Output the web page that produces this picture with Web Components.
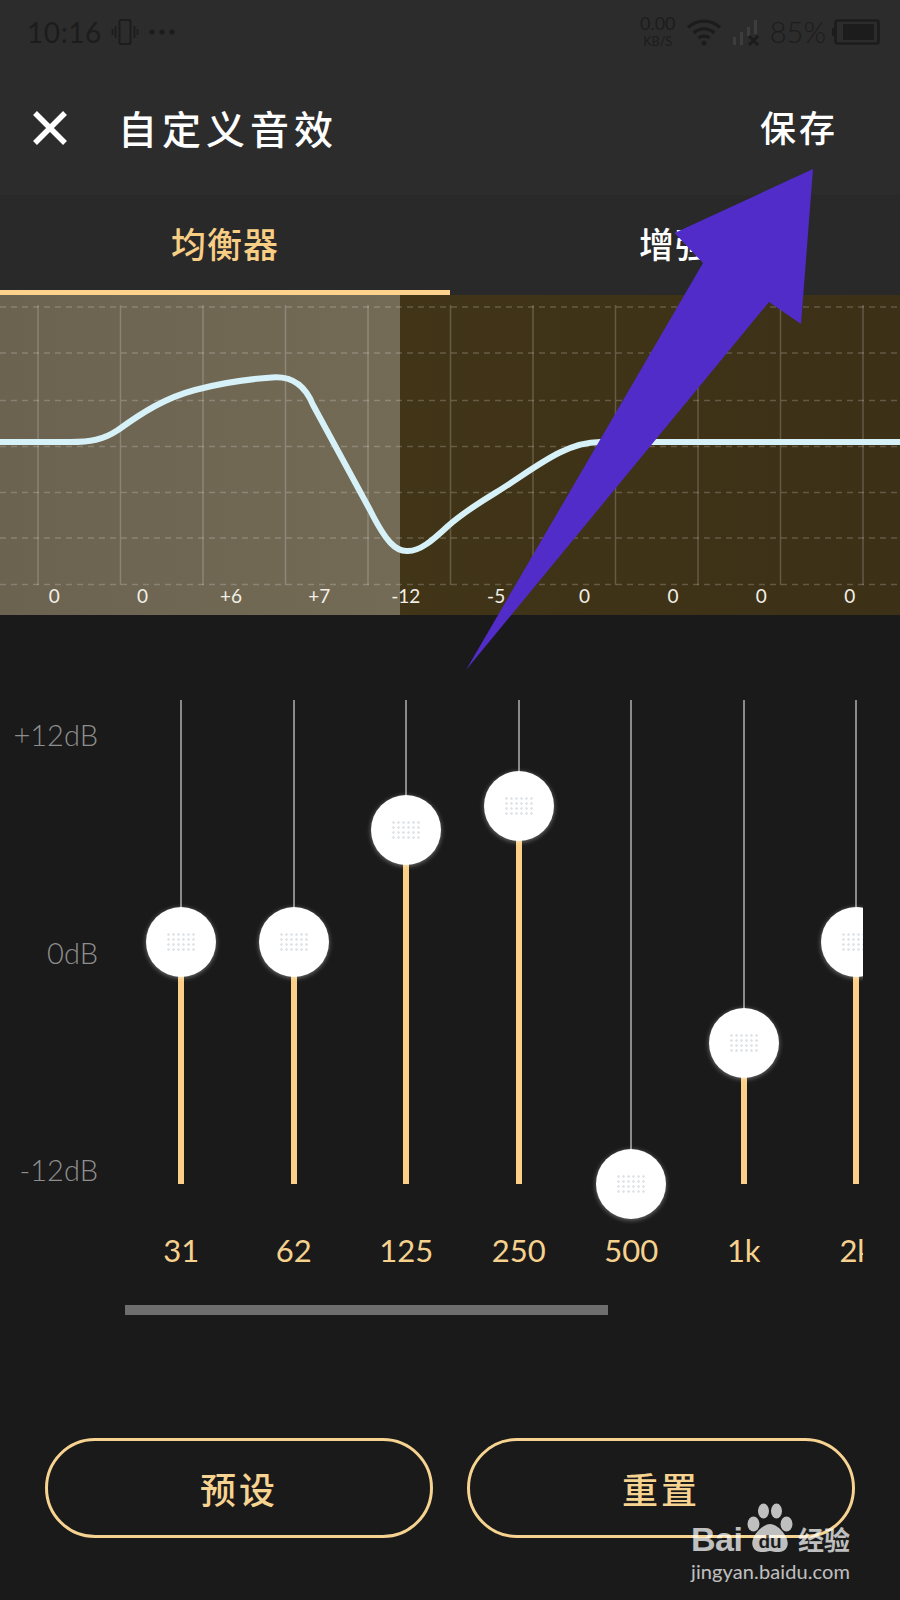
<!DOCTYPE html>
<html lang="zh">
<head>
<meta charset="utf-8">
<title>自定义音效</title>
<style>
html,body{margin:0;padding:0;background:#1a1a1a;}
body{width:900px;height:1600px;overflow:hidden;position:relative;font-family:"Lato","Noto Sans CJK SC",sans-serif;}
</style>
</head>
<body>
<eq-app>
  <phone-status></phone-status>
  <app-header title="自定义音效" action="保存"></app-header>
  <tab-bar></tab-bar>
  <eq-chart values="0,0,+6,+7,-12,-5,0,0,0,0"></eq-chart>
  <eq-panel>
    <eq-band label="31" pos="241.5"></eq-band>
    <eq-band label="62" pos="241.5"></eq-band>
    <eq-band label="125" pos="130"></eq-band>
    <eq-band label="250" pos="106"></eq-band>
    <eq-band label="500" pos="484"></eq-band>
    <eq-band label="1k" pos="343"></eq-band>
    <eq-band label="2k" pos="241.5"></eq-band>
  </eq-panel>
  <action-row>
    <pill-button>预设</pill-button>
    <pill-button>重置</pill-button>
  </action-row>
</eq-app>
<pointer-arrow></pointer-arrow>
<baidu-mark></baidu-mark>
<script>
const CJK='"Noto Sans CJK SC",sans-serif';
function def(name,html,setup){
  customElements.define(name,class extends HTMLElement{
    connectedCallback(){
      if(this.shadowRoot)return;
      const r=this.attachShadow({mode:'open'});
      r.innerHTML=typeof html==='function'?html(this):html;
      if(setup)setup(this,r);
    }
  });
}
def('eq-app',`<style>:host{display:flex;flex-direction:column;width:900px;height:1600px;background:#1a1a1a}</style><slot></slot>`);

def('phone-status',`<style>
:host{display:flex;align-items:center;justify-content:space-between;height:65px;box-sizing:border-box;padding:0 20px 2px 27px;background:#2c2c2c;color:#1c1c1c;font-family:Lato,sans-serif;font-weight:400}
.l,.r{display:flex;align-items:center}
.t{font-size:28px;letter-spacing:.6px;line-height:1}
.v{margin-left:9px}.d{margin-left:10px}
.n{display:flex;flex-direction:column;align-items:center;width:38px}
.n b{font-weight:400;font-size:18px;line-height:20px}.n i{font-style:normal;font-weight:400;font-size:12.5px;line-height:17px;}
.w{margin-left:9px}.s{margin-left:10px}
.p{font-size:29px;margin-left:6px;line-height:1;font-weight:300}
.b{margin-left:6px}
</style>
<div class="l"><span class="t">10:16</span>
<svg class="v" width="28" height="28" viewBox="0 0 28 28" fill="none" stroke="#1c1c1c"><rect x="8.5" y="2" width="11" height="24" rx="1.5" stroke-width="2"/><path d="M4.5 8v12M1.5 11v6M23.5 8v12M26.5 11v6" stroke-width="1.6"/></svg>
<svg class="d" width="26" height="8" viewBox="0 0 26 8" fill="#1c1c1c"><circle cx="3" cy="4" r="2.6"/><circle cx="13" cy="4" r="2.6"/><circle cx="23" cy="4" r="2.6"/></svg></div>
<div class="r"><span class="n"><b>0.00</b><i>KB/S</i></span>
<svg class="w" width="36" height="28" viewBox="0 0 36 28" fill="none" stroke="#1c1c1c" stroke-width="3.4"><path d="M2 9.5C11 1 25 1 34 9.5M7.5 15C13.500 9.500 22.500 9.500 28.500 15M12.500 20C15.500 17.500 20.500 17.500 23.500 20"/><circle cx="18" cy="25" r="2.500" fill="#1c1c1c" stroke="none"/></svg>
<svg class="s" width="32" height="28" viewBox="0 0 32 28"><g fill="#3d3d3d"><rect x="1" y="19" width="3" height="8"/><rect x="8" y="14" width="3" height="13"/><rect x="15" y="9" width="3" height="9"/><rect x="22" y="2" width="3" height="14"/></g><path d="M17 18l9 9M26 18l-9 9" stroke="#1c1c1c" stroke-width="3" fill="none"/></svg>
<span class="p">85%</span>
<svg class="b" width="48" height="26" viewBox="0 0 48 26" fill="none"><rect x="3.500" y="1.500" width="43" height="23" rx="2" stroke="#1c1c1c" stroke-width="2.600"/><rect x="0" y="9" width="3" height="8" fill="#1c1c1c"/><rect x="11" y="5" width="31" height="16" fill="#1c1c1c"/></svg>
</div>`);

def('app-header',h=>`<style>
:host{display:flex;align-items:center;height:130px;box-sizing:border-box;padding:0 0 6px 33px;background:#2c2c2c;color:#fff;font-family:${CJK}}
svg{flex:none;margin-top:2px}
.t{margin-left:51px;font-size:39px;font-weight:500;letter-spacing:5px;line-height:1.2}
.a{margin-left:auto;margin-right:62px;font-size:36px;font-weight:500;letter-spacing:3px;line-height:1.2}
</style>
<svg width="34" height="34" viewBox="0 0 34 34" stroke="#fff" stroke-width="5.500"><path d="M2 2L32 32M32 2L2 32"/></svg>
<span class="t">${h.getAttribute('title')}</span><span class="a">${h.getAttribute('action')}</span>`);

def('tab-bar',`<style>
:host{display:grid;grid-template-columns:450px 450px;height:100px;background:#292929;font-family:${CJK};font-size:35px;font-weight:500;letter-spacing:1px;line-height:1.2;color:#fff}
div{display:flex;align-items:center;justify-content:center;box-sizing:border-box;border-bottom:5px solid transparent}
.on{color:#f8ce85;border-bottom-color:#fcd28c}
</style><div class="on">均衡器</div><div>增强</div>`);

def('eq-chart',h=>{
  const vs=[38,120.5,203,285.500,368,450.500,533,615.500,698,780.500,863];
  const hs=[12,58,105.500,151.500,197.500,243,289.500];
  const lines=vs.map(x=>`<line x1="${x}" x2="${x}" y1="10" y2="290" stroke="rgba(255,255,255,.2)" stroke-width="1.500"/>`).join('');
  const dash=hs.map(y=>`<line x1="0" x2="900" y1="${y}" y2="${y}" stroke="rgba(255,255,255,.2)" stroke-width="1.500" stroke-dasharray="6 5"/>`).join('');
  const labels=h.getAttribute('values').split(',').map(v=>`<span>${v}</span>`).join('');
  return `<style>
:host{display:flex;flex-direction:column;justify-content:flex-end;position:relative;height:320px;background:linear-gradient(90deg,#453818,#3c3017);font-family:Lato,sans-serif;color:#f2efe6;overflow:hidden}
.shade{position:absolute;left:0;top:0;bottom:0;width:400px;background:linear-gradient(90deg,#6b6250,#746b56)}
svg{position:absolute;left:0;top:0}
.labels{position:relative;display:grid;grid-template-columns:repeat(10,88.400px);padding:0 0 0 10px;height:30px;align-items:center;font-size:19px;font-weight:400}
span{text-align:center;line-height:1;transform:translateY(-5px);}
span:nth-child(5){transform:translate(-2px,-5px)}
</style>
<div class="shade"></div>
<svg width="900" height="320" viewBox="0 295 900 320"><g transform="translate(0,295)">${lines}${dash}</g>
<path d="M0 442 L70 442 C90 442 103 440 118 430 C143 412 165 398 195 390 C225 382 250 379 272 377.500 C292 376 305 385 313 405 L370 510 C386 542 396 552 408 551 C420 551 432 541 448 526 C465 511 482 501 500 490 C535 468 565 442 600 442 L900 442" fill="none" stroke="#d6f2f8" stroke-width="6"/></svg>
<div class="labels">${labels}</div>`;
});

def('eq-panel',`<style>
:host{display:grid;grid-template-columns:125px 738px;margin-top:85px;font-family:Lato,sans-serif;font-weight:400}
.axis{display:flex;flex-direction:column;justify-content:space-between;align-items:flex-end;height:471px;padding:17px 27px 0 0;box-sizing:content-box;width:98px;font-size:29px;font-weight:300;line-height:36px;color:#8e8e8e}
.view{display:flex;overflow:hidden;width:738px}
.bar{grid-column:2;width:483px;height:10px;margin-top:36px;background:#6e6e6e}
::slotted(eq-band){flex:none}
</style>
<div class="axis"><span>+12dB</span><span>0dB</span><span>-12dB</span></div>
<div class="view"><slot></slot></div>
<div class="bar"></div>`);

def('eq-band',h=>{
  const pos=parseFloat(h.getAttribute('pos'));
  return `<style>
:host{display:flex;flex-direction:column;align-items:center;width:112.500px;font-family:Lato,sans-serif;font-weight:400}
.track{position:relative;width:6px;height:484px;display:flex;flex-direction:column;align-items:center;}
.up{width:2px;background:#8a8a8a;height:${pos}px}
.down{width:6px;background:#fbcf86;flex:1}
.knob{position:absolute;left:50%;top:${pos}px;width:70px;height:70px;margin:-35px 0 0 -35px;border-radius:50%;background:#fff;box-shadow:0 1px 5px rgba(255,255,255,.4);display:flex;align-items:center;justify-content:center}
.dots{width:30px;height:20px;background-image:radial-gradient(circle,#e2e5e8 1.100px,transparent 1.500px);background-size:5px 5px}
.lb{margin-top:47px;font-size:31px;line-height:38px;color:#f6d18e;white-space:nowrap}
</style>
<div class="track"><div class="up"></div><div class="down"></div><div class="knob"><div class="dots"></div></div></div>
<div class="lb">${h.getAttribute('label')}</div>`;
});

def('action-row',`<style>:host{display:grid;grid-template-columns:388px 388px;column-gap:34px;margin:123px 0 0 45px}</style><slot></slot>`);
def('pill-button',`<style>:host{display:flex;align-items:center;justify-content:center;height:100px;box-sizing:border-box;border:3px solid #f7d391;border-radius:50px;color:#f7d391;font-family:${CJK};font-weight:500;font-size:36px;letter-spacing:3px}</style><slot></slot>`);

def('pointer-arrow',`<style>:host{position:absolute;left:0;top:0;width:900px;height:700px;pointer-events:none}svg{display:block}</style>
<svg width="900" height="700" viewBox="0 0 900 700"><polygon points="813,169 674.500,233 703,263 466,670 769,302 801,324" fill="#522cc9"/></svg>`);

def('baidu-mark',`<style>
:host{position:absolute;left:688px;top:1502px;width:170px;height:84px;color:#fff;opacity:.72;pointer-events:none}
.top{display:flex;align-items:flex-end;height:52px}
.bai{font:700 34px/30px "Liberation Sans",sans-serif;letter-spacing:-.5px;width:56px;margin-left:3px;}
.paw{position:relative;flex:none;width:46px;height:52px}
.paw svg{position:absolute;left:0;top:0}
.du{position:absolute;left:0;right:0;top:31px;text-align:center;font:700 19px/18px "Liberation Sans",sans-serif;color:#1a1a1a}
.jy{font:700 26px/30px ${CJK};margin-left:5px;white-space:nowrap}
.url{font:400 20px/26px Lato,"Liberation Sans",sans-serif;margin:4px 0 0 3px;letter-spacing:.1px;white-space:nowrap}
</style>
<div class="top"><span class="bai">Bai</span><span class="paw"><svg width="46" height="52" viewBox="0 0 46 52" fill="#fff"><ellipse cx="6.500" cy="22" rx="6" ry="7.500"/><ellipse cx="16.500" cy="9" rx="5.500" ry="7.500"/><ellipse cx="29.500" cy="9" rx="5.500" ry="7.500"/><ellipse cx="39.500" cy="22" rx="6" ry="7.500"/><path d="M23 22C31 22 44 36 40 45C37 52 28 50 23 49C18 50 9 52 6 45C2 36 15 22 23 22Z"/></svg><span class="du">du</span></span><span class="jy">经验</span></div>
<div class="url">jingyan.baidu.com</div>`);
</script>
</body>
</html>
